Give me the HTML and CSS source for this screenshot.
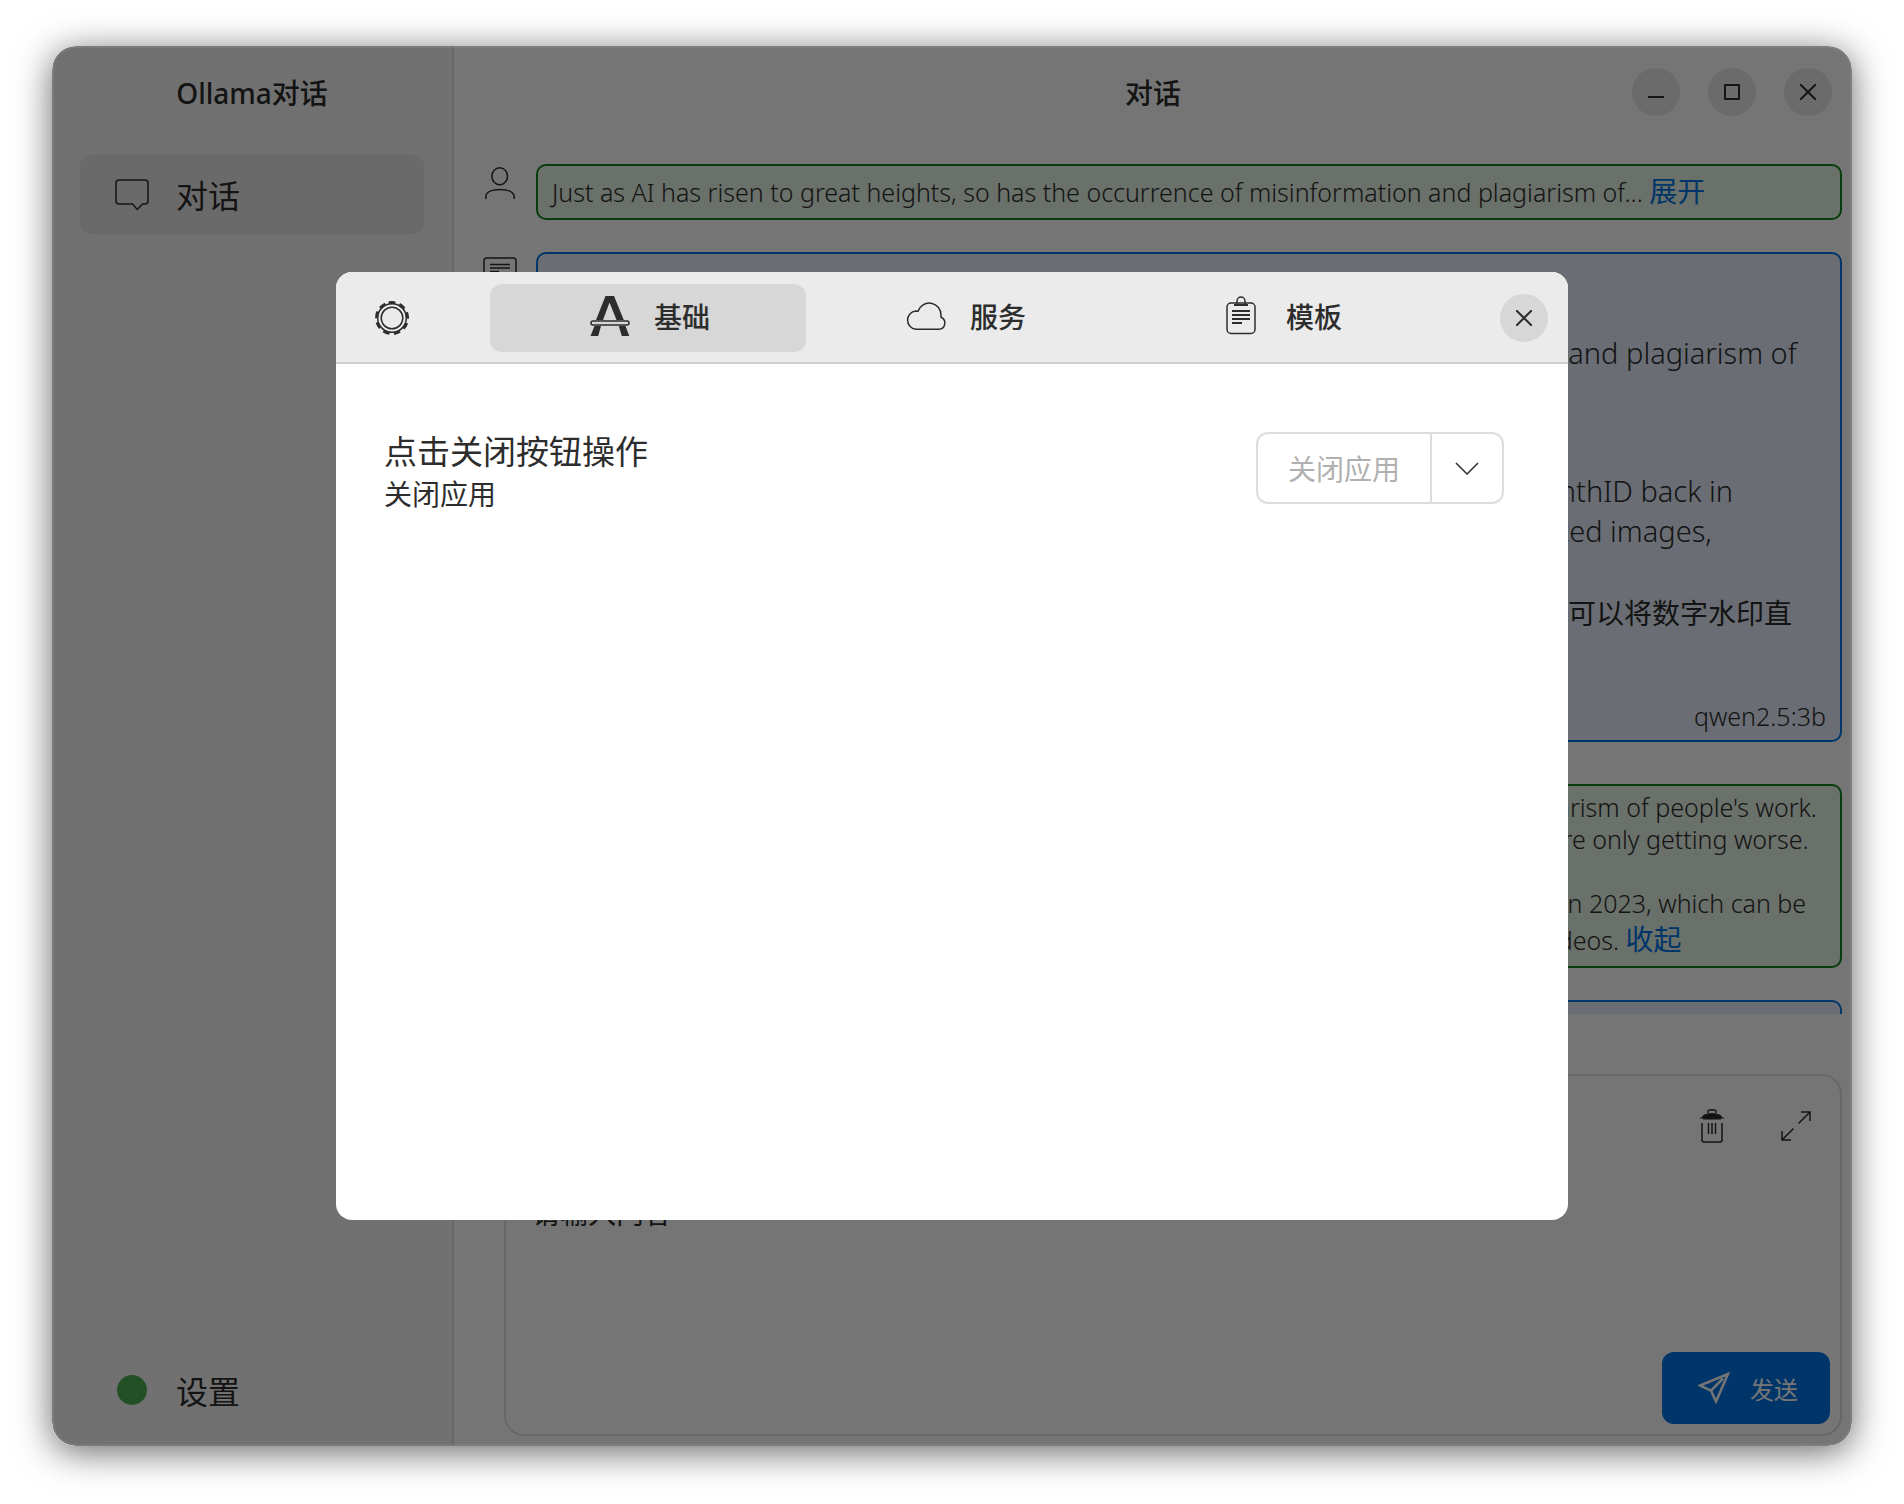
FILE: index.html
```html
<!DOCTYPE html>
<html lang="zh-CN">
<head>
<meta charset="utf-8">
<title>Ollama对话</title>
<link rel="stylesheet" href="styles.css">
</head>
<body>
<div class="window">
  <aside class="sidebar">
    <header class="titlebar"><h1 class="title">Ollama对话</h1></header>
    <nav class="nav">
      <a class="nav-item is-active" href="#chat">
        <span class="nav-icon"><svg width="34" height="34" viewBox="0 -2 34 34"><path d="M4 1H30Q33 1 33 4V22Q33 25 30 25H27.500L22.300 30.500 17.500 25H4Q1 25 1 22V4Q1 1 4 1Z"/></svg></span>
        <span>对话</span>
      </a>
      <a class="nav-item" href="#settings">
        <span class="nav-icon"><span class="status-dot"></span></span>
        <span>设置</span>
      </a>
    </nav>
  </aside>

  <main class="main">
    <header class="titlebar">
      <h2 class="title">对话</h2>
      <div class="window-controls">
        <button class="round-button" type="button" aria-label="最小化"><svg width="16" height="16" viewBox="0 0 16 16"><path class="bold" d="M0 13H16"/></svg></button>
        <button class="round-button" type="button" aria-label="最大化"><svg width="16" height="16" viewBox="0 0 16 16"><path class="bold" d="M1 1H15V15H1Z"/></svg></button>
        <button class="round-button" type="button" aria-label="关闭窗口"><svg width="16" height="16" viewBox="0 0 16 16"><path class="cross" d="M0 0 16 16M16 0 0 16"/></svg></button>
      </div>
    </header>

    <section class="messages">
      <article class="message">
        <span class="avatar"><svg width="30" height="32" viewBox="0 0 30 32"><ellipse cx="14.700" cy="9.300" rx="7.800" ry="8.500"/><path d="M.800 32V30C.800 24.500 8 22.500 15 22.500S29.200 24.500 29.200 30V32"/></svg></span>
        <div class="bubble bubble-user">
          <p>Just as AI has risen to great heights, so has the occurrence of misinformation and plagiarism of... <a class="toggle" href="#expand">展开</a></p>
        </div>
      </article>
      <article class="message message-reply">
        <span class="avatar"><svg width="34" height="34" viewBox="0 0 34 34"><path d="M4 3H30Q33 3 33 6V25Q33 28 30 28H4Q1 28 1 25V6Q1 3 4 3ZM7 9.500H27M7 13H27M7 16.500H16"/></svg></span>
        <div class="bubble bubble-model">
          <div class="reply">
            <p>原文：</p>
            <p>Just as AI has risen to great heights, so has the occurrence of misinformation and plagiarism of<br>people's work.</p>
            <p>They are only getting worse.<br>Google DeepMind key first answer to this growing problem was launching SynthID back in<br>2023, a kit that can be used to put a digital watermark on all of the AI-generated images,</p>
            <p class="translation">谷歌旗下的人工智能研究部门早在2023年就推出了全新的水印识别工具，这一工具可以将数字水印直<br>接嵌入图像。</p>
          </div>
          <p class="model-name">qwen2.5:3b</p>
        </div>
      </article>
      <article class="message">
        <span class="avatar"><svg width="30" height="32" viewBox="0 0 30 32"><ellipse cx="14.700" cy="9.300" rx="7.800" ry="8.500"/><path d="M.800 32V30C.800 24.500 8 22.500 15 22.500S29.200 24.500 29.200 30V32"/></svg></span>
        <div class="bubble bubble-user">
          <p>Just as AI has risen to greater heights, so has the occurrence of misinformation and plagiarism of people's work.<br>Deepfakes and similar kinds of generated content keep on spreading online, and things are only getting worse.<br><br>Google DeepMind's answer to the worsening problem was firstly launching SynthID back in 2023, which can be<br>used to put a digital watermark on all synthetic images, on text, on audio tracks and on videos. <a class="toggle" href="#collapse">收起</a></p>
        </div>
      </article>
      <article class="message">
        <span class="avatar"></span>
        <div class="bubble bubble-model"></div>
      </article>
    </section>

    <form class="composer">
      <div class="composer-tools">
        <button class="icon-button" type="button" aria-label="清空"><svg width="26" height="34" viewBox="0 0 26 34"><path d="M9 4V2.500Q9 1 10.500 1H15.500Q17 1 17 2.500V4M3 14V31Q3 33 5 33H21Q23 33 23 31V14M9.500 14V25M13 14V25M16.500 14V25"/><path class="solid" d="M0 9.500Q3 8.500 4 6.500C7 3 19 3 22 6.500Q23 8.500 26 9.500H22V10.500H4V9.500Z"/></svg></button>
        <button class="icon-button" type="button" aria-label="展开输入框"><svg width="30" height="30" viewBox="0 0 30 30"><path d="M17.500 12.500 29 1M20 1H29V10M12.500 17.500 1 29M1 20V29H10"/></svg></button>
      </div>
      <textarea class="composer-input" aria-label="请输入内容" placeholder="请输入内容"></textarea>
      <button class="send" type="button"><svg width="32" height="32" viewBox="0 0 32 32"><path d="M30 2 2 13.500 13 18.700 18 29.500ZM13 18.700 25 6.500"/></svg><span>发送</span></button>
    </form>
  </main>

  <div class="scrim">
    <div class="dialog" role="dialog" aria-modal="true" aria-label="设置">
      <header class="dialog-header">
        <span class="dialog-icon"><svg width="36" height="36" viewBox="0 0 36 36"><circle cx="18" cy="18" r="14.300"/><circle cx="18" cy="18" r="10.800"/><circle class="teeth" cx="18" cy="18" r="15.500" transform="rotate(-102 18 18)"/></svg></span>
        <div class="tabs" role="tablist">
          <button class="tab is-selected" type="button" role="tab" aria-selected="true">
            <svg width="40" height="40" viewBox="0 0 40 40"><path class="solid" d="M6 24 15.500 0H24L33.800 24H26.500L19.500 6.500 13 24ZM4.500 30H11L8.200 40H.500ZM28.800 30H35.500L39.300 40H31.800Z"/><rect x="1" y="25" width="38" height="4" rx="2"/></svg>
            <span>基础</span>
          </button>
          <button class="tab" type="button" role="tab" aria-selected="false">
            <svg width="40" height="28" viewBox="0 0 40 28"><path d="M9.800 27.200A9.200 9.200 0 0 1 9.800 8.900L12 9.200A11.800 11.800 0 0 1 35 13V15.300A6.200 6.200 0 0 1 33 27.200Z"/></svg>
            <span>服务</span>
          </button>
          <button class="tab" type="button" role="tab" aria-selected="false">
            <svg width="40" height="42" viewBox="-4 -1 40 42"><rect x="1" y="7" width="28" height="30.500" rx="4"/><path d="M11 8.500V5A4 4 0 0 1 19 5V8.500"/><path class="bold" d="M8 9H22M6 15H24M6 19H24M6 23H24M6 27H16"/></svg>
            <span>模板</span>
          </button>
        </div>
        <div class="dialog-close">
          <button class="round-button" type="button" aria-label="关闭"><svg width="16" height="16" viewBox="0 0 16 16"><path class="cross" d="M0 0 16 16M16 0 0 16"/></svg></button>
        </div>
      </header>
      <div class="dialog-body">
        <div class="setting">
          <p class="setting-title">点击关闭按钮操作</p>
          <p class="setting-value">关闭应用</p>
        </div>
        <div class="split-button">
          <button class="split-label" type="button" disabled>关闭应用</button>
          <button class="split-arrow" type="button" aria-label="选择操作"><svg width="24" height="14" viewBox="0 0 24 14"><path d="M1 2 12 13 23 2"/></svg></button>
        </div>
      </div>
    </div>
  </div>
</div>
</body>
</html>
```
FILE: styles.css
```css
* {
  box-sizing: border-box;
}

body {
  margin: 0;
  height: 100vh;
  padding: 46px 52px 58px;
  background: #fff;
  color: #2d2d2d;
  font-family: "Noto Sans", "Noto Sans CJK SC", sans-serif;
  font-size: 28px;
  font-weight: 400;
}

h1, h2, p {
  margin: 0;
}

a {
  color: inherit;
  text-decoration: none;
}

button {
  padding: 0;
  border: 0;
  background: none;
  color: inherit;
  font: inherit;
}

svg {
  display: block;
  flex: none;
  fill: none;
  stroke: currentColor;
  stroke-width: 1.5;
}

svg .bold {
  stroke-width: 2;
}

svg .cross {
  stroke-width: 2;
}

svg .solid {
  fill: currentColor;
  stroke: none;
}

svg .teeth {
  stroke-width: 3;
  stroke-dasharray: 6.500 4.320;
}

.window {
  position: relative;
  display: flex;
  height: 100%;
  border-radius: 24px;
  overflow: clip;
  background: #fff;
  box-shadow: 0 6px 36px rgba(0, 0, 0, 0.6);
}

.sidebar {
  display: flex;
  flex-direction: column;
  flex: none;
  width: 402px;
  border-right: 2px solid #e0e0e0;
  background: #f7f7f7;
}

.titlebar {
  position: relative;
  display: flex;
  align-items: center;
  justify-content: center;
  flex: none;
  height: 92px;
}

.title {
  font-size: 28px;
  font-weight: 500;
}

.nav {
  display: flex;
  flex: 1;
  flex-direction: column;
  justify-content: space-between;
  padding: 16px 28px;
}

.nav-item {
  display: flex;
  align-items: center;
  height: 80px;
  padding-left: 34px;
  gap: 26px;
  border-radius: 12px;
  font-size: 32px;
}

.nav-item.is-active {
  background: #e8e8e8;
}

.nav-icon {
  display: flex;
  justify-content: center;
  width: 36px;
}

.status-dot {
  width: 30px;
  height: 30px;
  border-radius: 50%;
  background: #4caf50;
}

.main {
  display: flex;
  flex: 1;
  flex-direction: column;
  min-width: 0;
}

.window-controls {
  position: absolute;
  right: 20px;
  display: flex;
  gap: 28px;
}

.round-button {
  display: grid;
  place-items: center;
  width: 48px;
  height: 48px;
  border-radius: 50%;
  background: #e9e9e9;
}

.messages {
  display: flex;
  flex: 1;
  flex-direction: column;
  gap: 32px;
  min-height: 0;
  margin-bottom: 60px;
  padding: 26px 10px 0 28px;
  overflow: hidden;
}

.message {
  display: flex;
  flex: none;
  gap: 18px;
}

.message-reply {
  margin-bottom: 10px;
}

.avatar {
  display: flex;
  justify-content: center;
  flex: none;
  width: 36px;
  padding-top: 3px;
}

.bubble {
  flex: 1;
  min-width: 0;
  border: 2px solid;
  border-radius: 10px;
}

.bubble-user {
  padding: 5px 14px 7px;
  border-color: #0e8420;
  background: #e7f3e6;
  font-size: 25px;
  font-weight: 300;
  line-height: 32px;
}

.bubble-user p {
  white-space: nowrap;
}

.bubble-user .toggle {
  color: #0073e5;
  font-size: 28px;
  font-weight: 400;
  line-height: 40px;
}

.bubble-model {
  min-height: 56px;
  padding: 6px 14px;
  border-color: #0073e5;
  background: #e6f0fc;
}

.reply {
  display: flex;
  flex-direction: column;
  gap: 18px;
  height: 426px;
  padding-top: 15px;
  overflow: hidden;
  font-size: 29px;
  font-weight: 300;
  line-height: 40px;
  white-space: nowrap;
}

.translation {
  padding-top: 24px;
  font-size: 28px;
  font-weight: 400;
}

.model-name {
  padding: 14px 0 2px;
  font-size: 25px;
  font-weight: 300;
  line-height: 32px;
  text-align: right;
}

.composer {
  display: flex;
  flex: none;
  flex-direction: column;
  height: 362px;
  margin: 0 10px 10px 50px;
  padding: 22px 10px 10px 26px;
  border: 2px solid #e0e0e0;
  border-radius: 20px;
}

.composer-tools {
  display: flex;
  justify-content: flex-end;
  gap: 28px;
  padding-right: 6px;
}

.icon-button {
  display: grid;
  place-items: center;
  width: 56px;
  height: 56px;
}

.composer-input {
  flex: 1;
  padding: 38px 0 0;
  border: 0;
  outline: 0;
  background: none;
  color: inherit;
  font: inherit;
  resize: none;
}

.composer-input::placeholder {
  color: inherit;
}

.send {
  display: flex;
  align-items: center;
  align-self: flex-end;
  gap: 20px;
  height: 72px;
  padding: 0 32px 0 36px;
  border-radius: 12px;
  background: #0073e5;
  color: #fff;
  font-size: 24px;
}

.send svg {
  stroke-width: 2.5;
}

/* Dimmed layer over the window that holds the settings dialog */
.scrim {
  position: absolute;
  inset: 0;
  display: grid;
  place-items: center;
  border: 2px solid rgba(255, 255, 255, 0.06);
  border-radius: 24px;
  background: rgba(0, 0, 0, 0.54);
}

.dialog {
  width: min(1232px, 100% - 96px);
  height: min(948px, 100% - 96px);
  border-radius: 16px;
  overflow: hidden;
  background: #fff;
}

.dialog-header {
  display: flex;
  align-items: center;
  height: 92px;
  padding-top: 2px;
  border-bottom: 2px solid #cfcfcf;
  background: #ebebeb;
}

.dialog-header .round-button {
  background: #d7d7d7;
}

.dialog-icon {
  width: 154px;
  padding-left: 38px;
}

.tabs {
  display: flex;
  flex: 1;
}

.tab {
  display: flex;
  align-items: center;
  justify-content: center;
  flex: 1;
  gap: 24px;
  height: 68px;
  padding: 0 0 4px 4px;
  border-radius: 12px;
  font-weight: 500;
}

.tab.is-selected {
  background: #d7d7d7;
}

.dialog-close {
  display: flex;
  justify-content: flex-end;
  width: 130px;
  padding-right: 20px;
}

.dialog-body {
  display: flex;
  align-items: flex-start;
  justify-content: space-between;
  padding: 68px 64px 0 48px;
}

.setting-title {
  font-size: 33px;
  line-height: 40px;
}

.setting-value {
  line-height: 44px;
}

.split-button {
  display: flex;
  height: 72px;
  border: 2px solid #dcdcdc;
  border-radius: 12px;
}

.split-label {
  padding: 0 30px;
  color: #b0b0b0;
}

.split-arrow {
  display: grid;
  place-items: center;
  width: 72px;
  border-left: 2px solid #dcdcdc;
}
```
